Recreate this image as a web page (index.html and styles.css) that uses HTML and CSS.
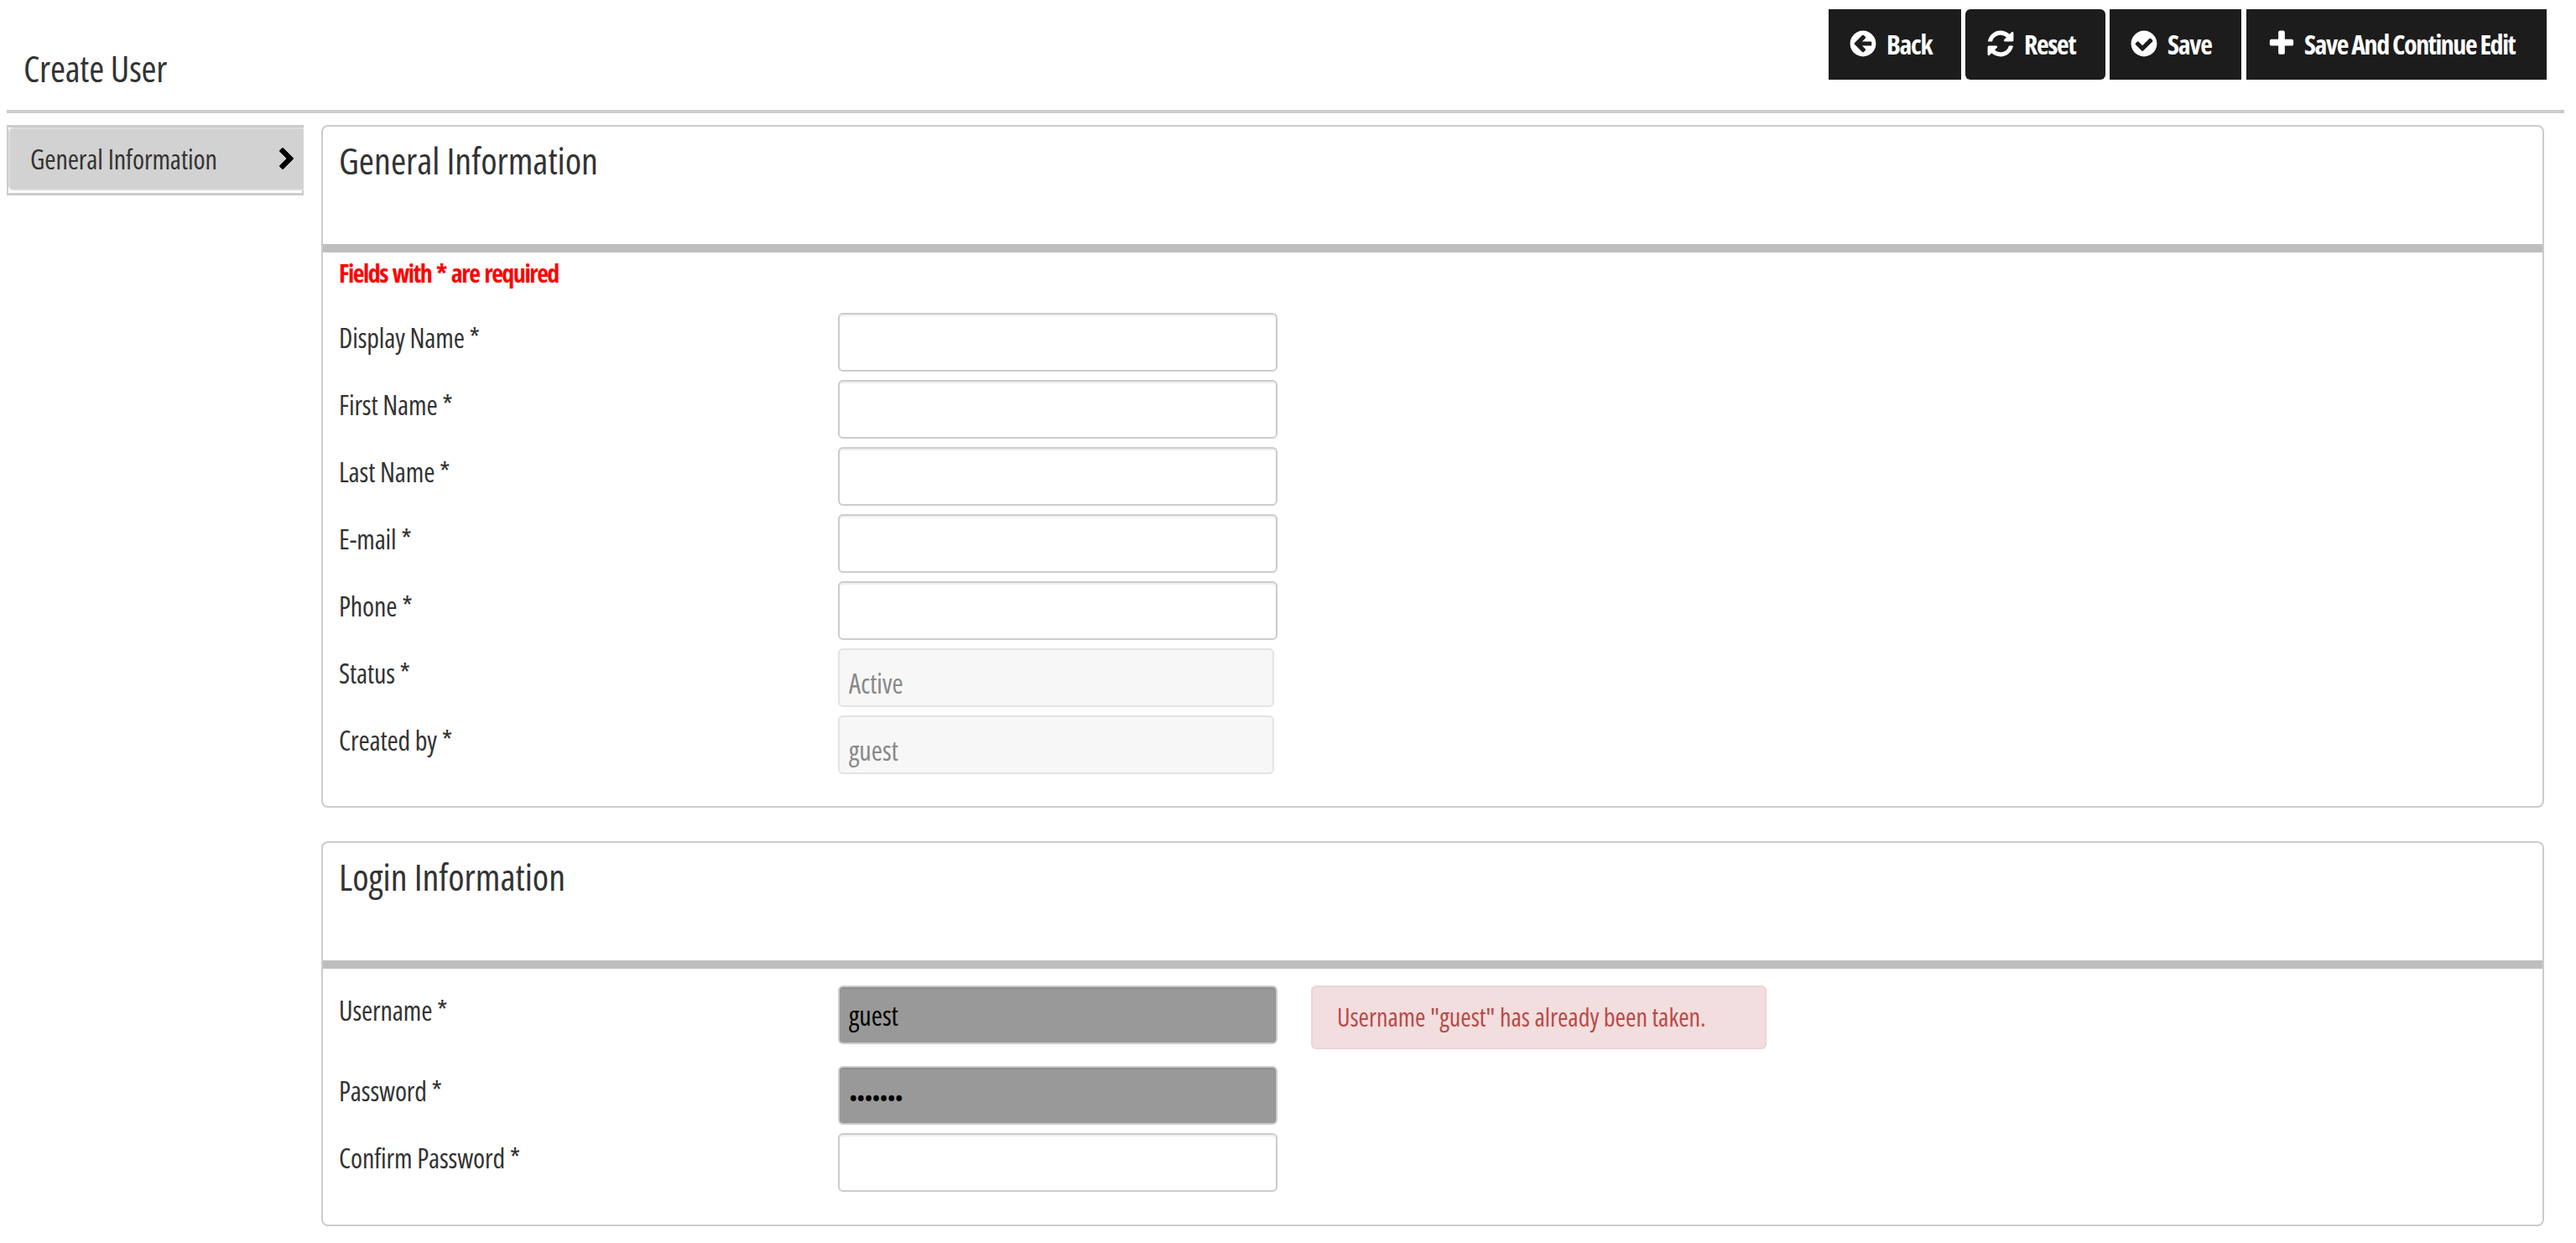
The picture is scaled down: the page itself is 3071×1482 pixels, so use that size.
FILE: index.html
```html
<!DOCTYPE html>
<html lang="en">
<head>
<meta charset="utf-8">
<title>Create User</title>
<link rel="stylesheet" href="styles.css">
</head>
<body>
<header class="page-head">
  <h1 class="page-title">Create User</h1>
  <nav class="actions">
    <a class="btn btn-back"><svg class="ico" viewBox="0 0 1792 1792"><path d="M1408 960v-128q0-26-19-45t-45-19h-502l189-189q19-19 19-45t-19-45l-91-91q-18-18-45-18t-45 18l-362 362-91 91q-18 18-18 45t18 45l91 91 362 362q18 18 45 18t45-18l91-91q18-18 18-45t-18-45l-189-189h502q26 0 45-19t19-45zm256-64q0 209-103 385.500t-279.500 279.500-385.500 103-385.500-103-279.500-279.500-103-385.500 103-385.500 279.500-279.500 385.500-103 385.500 103 279.500 279.500 103 385.500z"/></svg>Back</a>
    <a class="btn btn-reset"><svg class="ico" viewBox="0 0 1792 1792"><path d="M1639 1056q0 5-1 7-64 268-268 434.500t-478 166.500q-146 0-282.500-55t-243.500-157l-129 129q-19 19-45 19t-45-19-19-45v-448q0-26 19-45t45-19h448q26 0 45 19t19 45-19 45l-137 137q71 66 161 102t187 36q134 0 250-65t186-179q11-17 53-117 8-23 30-23h192q13 0 22.500 9.500t9.500 22.500zm25-800v448q0 26-19 45t-45 19h-448q-26 0-45-19t-19-45 19-45l138-138q-148-137-349-137-134 0-250 65t-186 179q-11 17-53 117-8 23-30 23h-199q-13 0-22.500-9.500t-9.500-22.500v-7q65-268 270-434.500t480-166.500q146 0 284 55.500t245 156.500l130-129q19-19 45-19t45 19 19 45z"/></svg>Reset</a>
    <a class="btn btn-save"><svg class="ico" viewBox="0 0 1792 1792"><path d="M1412 734q0-28-18-46l-91-90q-19-19-45-19t-45 19l-408 407-226-226q-19-19-45-19t-45 19l-91 90q-18 18-18 46 0 27 18 45l362 362q19 19 45 19 27 0 46-19l543-543q18-18 18-45zm252 162q0 209-103 385.500t-279.500 279.500-385.500 103-385.500-103-279.500-279.500-103-385.500 103-385.500 279.500-279.500 385.500-103 385.500 103 279.500 279.500 103 385.500z"/></svg>Save</a>
    <a class="btn btn-continue"><svg class="ico" viewBox="0 0 1792 1792"><path d="M1600 736v192q0 40-28 68t-68 28h-416v416q0 40-28 68t-68 28h-192q-40 0-68-28t-28-68v-416h-416q-40 0-68-28t-28-68v-192q0-40 28-68t68-28h416v-416q0-40 28-68t68-28h192q40 0 68 28t28 68v416h416q40 0 68 28t28 68z"/></svg>Save And Continue Edit</a>
  </nav>
</header>
<main class="layout">
  <aside class="side">
    <a class="side-item">General Information<svg class="chev" viewBox="0 0 1792 1792"><path d="M1363 877l-742 742q-19 19-45 19t-45-19l-166-166q-19-19-19-45t19-45l531-531-531-531q-19-19-19-45t19-45l166-166q19-19 45-19t45 19l742 742q19 19 19 45t-19 45z"/></svg></a>
  </aside>
  <div class="content">
    <section class="panel">
      <h2 class="panel-title">General Information</h2>
      <form class="panel-body">
        <p class="req">Fields with * are required</p>
        <div class="row"><label class="lbl">Display Name *</label><input class="inp" type="text"></div>
        <div class="row"><label class="lbl">First Name *</label><input class="inp" type="text"></div>
        <div class="row"><label class="lbl">Last Name *</label><input class="inp" type="text"></div>
        <div class="row"><label class="lbl">E-mail *</label><input class="inp" type="text"></div>
        <div class="row"><label class="lbl">Phone *</label><input class="inp" type="text"></div>
        <div class="row"><label class="lbl">Status *</label><input class="inp inp-off" type="text" value="Active" disabled></div>
        <div class="row"><label class="lbl">Created by *</label><input class="inp inp-off" type="text" value="guest" disabled></div>
      </form>
    </section>
    <section class="panel">
      <h2 class="panel-title">Login Information</h2>
      <form class="panel-body panel-body-login">
        <div class="row row-err"><label class="lbl">Username *</label><input class="inp inp-bad" type="text" value="guest"><div class="err">Username "guest" has already been taken.</div></div>
        <div class="row"><label class="lbl">Password *</label><input class="inp inp-bad inp-pass" type="password" value="1234567"></div>
        <div class="row"><label class="lbl">Confirm Password *</label><input class="inp" type="password"></div>
      </form>
    </section>
  </div>
</main>
</body>
</html>
```
FILE: styles.css
```css
* { box-sizing: border-box; }
html, body { background: #fff; }
body {
  margin: 0;
  padding: 0 14px 0 8px;
  font-family: "Open Sans", "Liberation Sans", sans-serif;
  font-stretch: 75%;
  font-size: 32px;
  color: #333;
}
.page-head {
  display: flex;
  justify-content: space-between;
  align-items: flex-end;
  height: 135px;
  border-bottom: 4px solid #ccc;
  padding: 0 21px 0 20px;
}
.page-title {
  margin: 0 0 19px;
  font-size: 43.5px;
  line-height: 60px;
  font-weight: 400;
  letter-spacing: -0.2px;
}
.actions { display: flex; gap: 5px; margin-bottom: 36px; }
.btn {
  display: flex;
  align-items: center;
  height: 84px;
  padding-bottom: 2px;
  background: #1c1c1c;
  color: #fff;
  font-size: 32px;
  font-weight: 700;
  letter-spacing: -1.3px;
  white-space: nowrap;
}
.ico { width: 36px; height: 36px; fill: #fff; flex: none; margin-right: 10px; }
.btn-back { width: 158px; padding-left: 23px; }
.btn-reset { width: 167px; padding-left: 24px; border-radius: 6px; }
.btn-save { width: 157px; padding-left: 23px; }
.btn-continue { width: 358px; padding-left: 24px; margin-left: 1px; letter-spacing: -1.45px; }
.btn-continue .ico { margin-right: 9px; }
.layout { display: flex; gap: 21px; margin-top: 14px; align-items: flex-start; }
.side {
  flex: none;
  width: 354px;
  height: 84px;
  border: solid #ccc;
  border-width: 3px 2px;
}
.side-item {
  display: flex;
  align-items: center;
  justify-content: space-between;
  height: 75px;
  margin-right: -2px;
  padding: 0 6px 0 24px;
  background: #d2d2d2;
  border: 2px solid #dcdcdc;
  border-right: 0;
  border-radius: 6px 0 0 6px;
  font-size: 32px;
  line-height: 40px;
  letter-spacing: -0.1px;
}
.chev { width: 28px; height: 28px; fill: #000; stroke: #000; stroke-width: 60; }
.content { flex: none; width: 2650px; display: flex; flex-direction: column; gap: 40px; }
.panel { border: 2px solid #ccc; border-radius: 8px; }
.panel-title {
  margin: 0;
  height: 150px;
  padding: 10px 19px 0;
  border-bottom: 10px solid #bebebe;
  font-size: 44px;
  line-height: 60px;
  font-weight: 400;
}
.panel-body { padding: 0 19px 28px; }
.panel-body-login { padding: 20px 19px 29px; }
.req {
  margin: 0;
  padding: 5px 0 27px;
  font-size: 30px;
  line-height: 40px;
  font-weight: 700;
  letter-spacing: -1.5px;
  word-spacing: 2px;
  color: #f00;
}
.row { display: flex; align-items: flex-start; height: 70px; margin-bottom: 10px; }
.row-err { height: 86px; }
.lbl {
  flex: none;
  width: 595px;
  padding-top: 10px;
  line-height: 40px;
  font-size: 32px;
  letter-spacing: -0.15px;
}
.inp {
  flex: none;
  width: 524px;
  height: 70px;
  padding: 0 10px 0 11px;
  border: 2px solid #ccc;
  border-radius: 6px;
  box-shadow: inset 0 2px 2px rgba(0,0,0,.07);
  background: #fff;
  color: #000;
  font: inherit;
  font-stretch: 75%;
  outline: 0;
}
.inp-off {
  width: 520px;
  padding-top: 13px;
  background: #f7f7f7;
  border-color: #e3e3e3;
  color: #888;
  box-shadow: none;
}
.inp-bad { background: #999; }
.inp-pass { padding-top: 3px; font-size: 28px; letter-spacing: -1.5px; }
.err {
  flex: none;
  width: 543px;
  height: 76px;
  margin-left: 40px;
  padding-left: 29px;
  border: 2px solid #ecd3d6;
  border-radius: 6px;
  background: #f2dede;
  color: #b94a48;
  font-size: 30px;
  line-height: 72px;
}
```
